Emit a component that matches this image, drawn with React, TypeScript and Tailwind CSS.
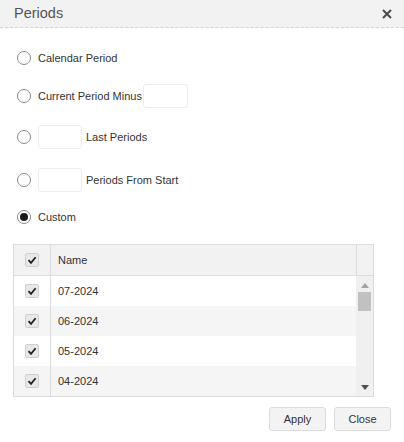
import React from "react";

const rows = ["07-2024", "06-2024", "05-2024", "04-2024"];

function Radio({ checked }: { checked?: boolean }) {
  return (
    <span className="flex h-[14px] w-[14px] shrink-0 items-center justify-center rounded-full border border-[#8a8a8a] bg-white">
      {checked && <span className="h-[8px] w-[8px] rounded-full bg-[#1a1a1a]" />}
    </span>
  );
}

function Check() {
  return (
    <span className="flex h-[14px] w-[14px] items-center justify-center rounded-[2px] border border-[#cfcfcf] bg-[#e8e8e8]">
      <svg width="10" height="10" viewBox="0 0 10 10">
        <path d="M1.5 5.2 L4 7.8 L8.6 2.2" fill="none" stroke="#222" strokeWidth="1.8" />
      </svg>
    </span>
  );
}

function Box({ className }: { className: string }) {
  return <span className={"block h-[24px] shrink-0 rounded-[3px] border border-[#ededed] bg-white " + className} />;
}

export default function App() {
  return (
    <div className="h-[442px] w-[404px] bg-white font-['Liberation_Sans',Arial,sans-serif] text-[11px] text-[#333]">
      {/* header */}
      <div className="flex h-[28px] items-center justify-between border-b border-dashed border-[#d4d4d4] bg-[#f2f2f2] pl-[14px] pr-[12px]">
        <span className="text-[14.5px] text-[#555]">Periods</span>
        <svg width="10" height="10" viewBox="0 0 10 10">
          <path d="M1 1 L9 9 M9 1 L1 9" stroke="#4a4a4a" strokeWidth="2" />
        </svg>
      </div>

      <div className="flex flex-col pl-[17px] pt-[23px]">
        <div className="flex h-[14px] items-center gap-[7px]">
          <Radio />
          <span>Calendar Period</span>
        </div>
        <div className="mt-[19px] flex h-[24px] items-center gap-[7px]">
          <Radio />
          <span>Current Period Minus</span>
          <Box className="-ml-[6px] w-[45px]" />
        </div>
        <div className="mt-[17px] flex h-[24px] items-center gap-[7px]">
          <Radio />
          <Box className="w-[44px]" />
          <span className="-ml-[3px]">Last Periods</span>
        </div>
        <div className="mt-[19px] flex h-[24px] items-center gap-[7px]">
          <Radio />
          <Box className="w-[44px]" />
          <span className="-ml-[3px]">Periods From Start</span>
        </div>
        <div className="mt-[18px] flex h-[14px] items-center gap-[7px]">
          <Radio checked />
          <span>Custom</span>
        </div>
      </div>

      {/* grid */}
      <div className="ml-[13px] mt-[20px] w-[361px] border border-[#dcdcdc]">
        <div className="flex h-[31px] border-b border-[#dcdcdc] bg-[#f2f2f2]">
          <div className="flex w-[37px] items-center justify-center border-r border-[#dcdcdc]">
            <Check />
          </div>
          <div className="flex flex-1 items-center pl-[7px]">Name</div>
          <div className="w-[17px] border-l border-[#dcdcdc]" />
        </div>
        <div className="flex">
          <div className="flex-1">
            {rows.map((r, i) => (
              <div key={r} className={"flex h-[30px] " + (i % 2 ? "bg-[#f5f5f5]" : "bg-white")}>
                <div className="flex w-[37px] items-center justify-center border-r border-[#dcdcdc]">
                  <Check />
                </div>
                <div className="flex flex-1 items-center pl-[7px]">{r}</div>
              </div>
            ))}
          </div>
          <div className="flex w-[17px] flex-col items-center bg-[#f0f0f0] pt-[7px]">
            <svg width="8" height="5" viewBox="0 0 8 5">
              <path d="M0 5 L4 0 L8 5 Z" fill="#a3a3a3" />
            </svg>
            <div className="mt-[4px] h-[19px] w-[13px] bg-[#c1c1c1]" />
            <div className="flex-1" />
            <svg width="8" height="5" viewBox="0 0 8 5" className="mb-[6px]">
              <path d="M0 0 L8 0 L4 5 Z" fill="#505050" />
            </svg>
          </div>
        </div>
      </div>

      <div className="mt-[10px] flex justify-end gap-[8px] pr-[13px]">
        <button className="h-[24px] w-[57px] rounded-[3px] border border-[#dcdcdc] bg-[#f3f3f3] text-[11px] text-[#333]">
          Apply
        </button>
        <button className="h-[24px] w-[57px] rounded-[3px] border border-[#dcdcdc] bg-[#f3f3f3] text-[11px] text-[#333]">
          Close
        </button>
      </div>
    </div>
  );
}
